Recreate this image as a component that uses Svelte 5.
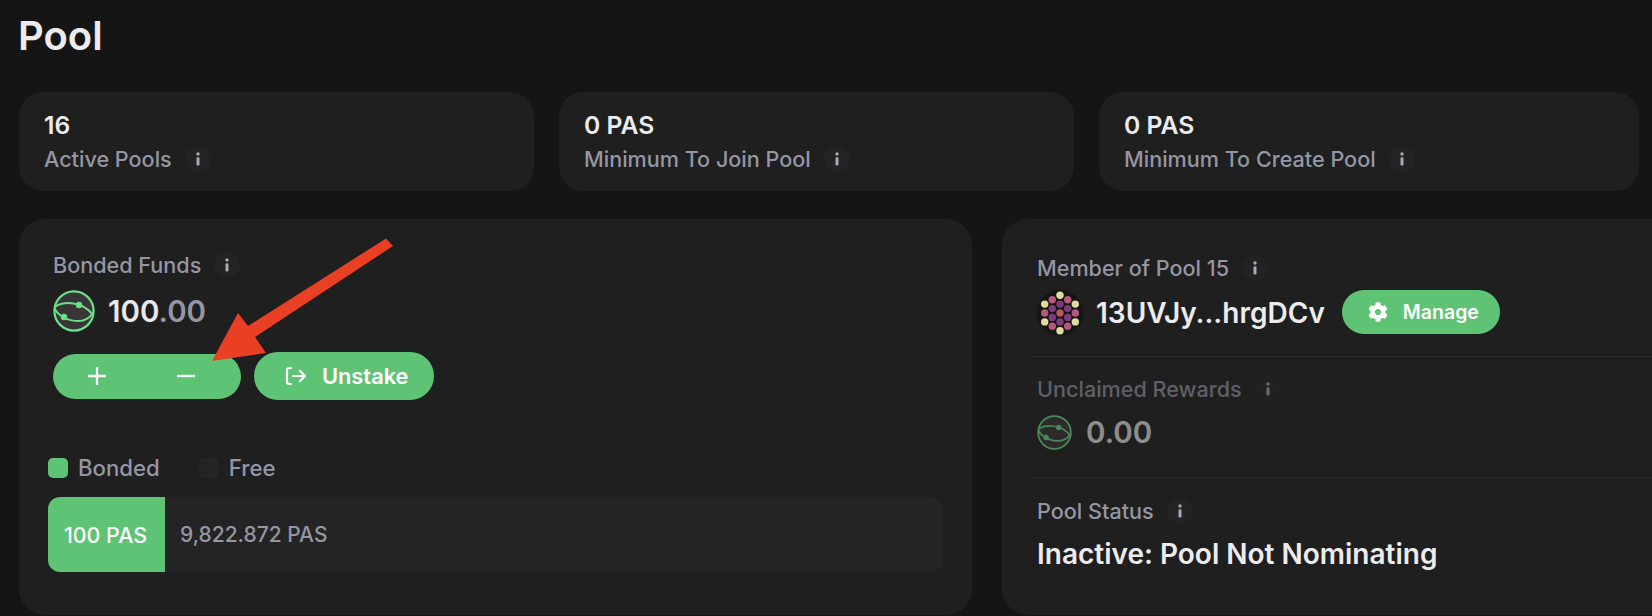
<script>
	const stats = [
		{ value: '16', label: 'Active Pools' },
		{ value: '0 PAS', label: 'Minimum To Join Pool' },
		{ value: '0 PAS', label: 'Minimum To Create Pool' }
	];

	// identicon dots, relative to the middle of the circle
	const yellow = '#e0dc9f';
	const pink = '#b5597a';
	const purple = '#7f3c7a';
	const dots = [
		[0, -17.7, yellow], [7.7, -13.3, pink], [15.3, -8.9, yellow], [15.3, 0, pink], [15.3, 8.9, yellow],
		[7.7, 13.3, pink], [0, 17.7, yellow], [-7.7, 13.3, pink], [-15.3, 8.9, yellow], [-15.3, 0, pink],
		[-15.3, -8.9, yellow], [-7.7, -13.3, pink],
		[0, -8.9, purple], [7.7, -4.4, purple], [7.7, 4.4, purple], [0, 8.9, purple], [-7.7, 4.4, purple], [-7.7, -4.4, purple],
		[0, 0, '#b8555f']
	];
</script>

{#snippet info()}
	<span class="info">
		<svg width="8" height="14" viewBox="0 0 8 14">
			<circle cx="4" cy="2" r="1.7" fill="currentColor" />
			<rect x="2.5" y="5.2" width="3" height="8.3" rx="1.2" fill="currentColor" />
		</svg>
	</span>
{/snippet}

{#snippet token(size)}
	<svg class="token" width={size} height={size} viewBox="0 0 42 42" fill="none">
		<circle cx="21" cy="21" r="19.6" fill="#3a3436" stroke="#6ae08a" stroke-width="2.2" />
		<path d="M2 17C10 11 30 11 40 25" stroke="#6ae08a" stroke-width="2" />
		<path d="M2 19C6 29 30 38 40 23" stroke="#6ae08a" stroke-width="2" />
		<circle cx="26" cy="15" r="3.2" fill="#6ae08a" />
		<circle cx="11" cy="27" r="3.2" fill="#6ae08a" />
	</svg>
{/snippet}

<div class="page">
	<h1>Pool</h1>

	<div class="stats">
		{#each stats as stat}
			<div class="stat">
				<div class="stat-value">{stat.value}</div>
				<div class="label">{stat.label} {@render info()}</div>
			</div>
		{/each}
	</div>

	<div class="panels">
		<section class="panel funds">
			<div class="label indent">Bonded Funds {@render info()}</div>
			<div class="amount indent">
				{@render token(42)}
				<span class="num">100<span class="decimals">.00</span></span>
			</div>
			<div class="actions indent">
				<div class="btn-group">
					<svg width="20" height="20" viewBox="0 0 20 20"><path d="M10 1v18M1 10h18" stroke="#fff" stroke-width="2.3" /></svg>
					<svg width="20" height="20" viewBox="0 0 20 20"><path d="M1 10h18" stroke="#fff" stroke-width="2.3" /></svg>
				</div>
				<div class="btn unstake">
					<svg width="22" height="20" viewBox="0 0 22 20" fill="none" stroke="#fff" stroke-width="2.2" stroke-linecap="round" stroke-linejoin="round">
						<path d="M6 2H4.5Q2 2 2 4.5v11Q2 18 4.5 18H6" />
						<path d="M8 10h12M15 5l5 5-5 5" />
					</svg>
					Unstake
				</div>
			</div>

			<div class="legend">
				<span class="swatch green"></span><span class="legend-text">Bonded</span>
				<span class="swatch dark"></span><span class="legend-text">Free</span>
			</div>
			<div class="bar">
				<div class="bar-bonded">100 PAS</div>
				<div class="bar-free">9,822.872 PAS</div>
			</div>
		</section>

		<section class="panel member">
			<div class="label">Member of Pool 15 {@render info()}</div>
			<div class="pool-row">
				<svg width="46" height="46" viewBox="-23 -23 46 46">
					<circle r="23" fill="#151515" />
					{#each dots as [x, y, color]}
						<circle cx={x} cy={y} r="3.7" fill={color} />
					{/each}
				</svg>
				<span class="address">13UVJy...hrgDCv</span>
				<div class="btn manage">
					<svg width="20" height="20" viewBox="0 0 512 512"><path fill="#fff" d="M487.4 315.7l-42.6-24.6c4.3-23.2 4.3-47 0-70.2l42.6-24.6c4.9-2.8 7.1-8.6 5.5-14-11.1-35.6-30-67.8-54.7-94.6-3.8-4.1-10-5.1-14.8-2.3L380.8 110c-17.9-15.4-38.5-27.3-60.8-35.1V25.8c0-5.6-3.9-10.5-9.4-11.7-36.7-8.2-74.3-7.8-109.2 0-5.5 1.2-9.4 6.1-9.4 11.7V75c-22.2 7.9-42.8 19.8-60.8 35.1L88.7 85.5c-4.9-2.8-11-1.9-14.8 2.3-24.7 26.7-43.6 58.9-54.7 94.6-1.7 5.4.6 11.2 5.5 14L67.3 221c-4.3 23.2-4.3 47 0 70.2l-42.6 24.6c-4.9 2.8-7.1 8.6-5.5 14 11.1 35.6 30 67.8 54.7 94.6 3.8 4.1 10 5.1 14.8 2.3l42.6-24.6c17.9 15.4 38.5 27.3 60.8 35.1v49.2c0 5.6 3.9 10.5 9.4 11.7 36.7 8.2 74.3 7.8 109.2 0 5.5-1.2 9.4-6.1 9.4-11.7v-49.2c22.2-7.9 42.8-19.8 60.8-35.1l42.6 24.6c4.9 2.8 11 1.9 14.8-2.3 24.7-26.7 43.6-58.9 54.7-94.6 1.5-5.5-.7-11.3-5.6-14.1zM256 336c-44.1 0-80-35.9-80-80s35.9-80 80-80 80 35.9 80 80-35.9 80-80 80z" /></svg>
					Manage
				</div>
			</div>
			<hr />
			<div class="rewards">
				<div class="label">Unclaimed Rewards {@render info()}</div>
				<div class="amount small">
					{@render token(35)}
					<span class="num">0.00</span>
				</div>
			</div>
			<hr class="second" />
			<div class="label status-label">Pool Status {@render info()}</div>
			<div class="status">Inactive: Pool Not Nominating</div>
		</section>
	</div>

	<!-- red annotation arrow over the buttons -->
	<svg class="arrow" width="400" height="380" viewBox="0 0 400 380">
		<path d="M386 238.5 393 246 255 337 266 353 212 361 238 313 248 326Z" fill="#e93f25" />
	</svg>
</div>

<style>
	:global(body) {
		margin: 0;
		background: #151515;
	}

	.page {
		position: relative;
		box-sizing: border-box;
		width: 1652px;
		height: 616px;
		padding: 13px 0 0 18px;
		overflow: hidden;
		background: #151515;
		font-family: Inter, 'Noto Sans', sans-serif;
		color: #ececee;
	}

	h1 {
		margin: 0 0 33px;
		font-size: 40px;
		line-height: 46px;
		font-weight: 600;
	}

	.stats {
		display: grid;
		grid-template-columns: 515px 515px 540px;
		gap: 25px;
		margin: 0 0 28px 1px;
	}

	.stat {
		box-sizing: border-box;
		height: 99px;
		padding: 17px 25px 0;
		background: #1f1f1f;
		border-radius: 24px;
	}

	.stat-value {
		font-size: 24.7px;
		line-height: 32px;
		font-weight: 600;
		margin-bottom: 5px;
	}

	.label {
		display: flex;
		align-items: center;
		gap: 13px;
		height: 26px;
		font-size: 21.6px;
		font-weight: 500;
		color: #9596a4;
		white-space: nowrap;
	}

	.info {
		display: inline-flex;
		align-items: center;
		justify-content: center;
		width: 26px;
		height: 26px;
		border-radius: 50%;
		background: #232323;
		color: #a8a9b5;
	}

	.panels {
		display: grid;
		grid-template-columns: 953px 680px;
		gap: 30px;
		margin-left: 1px;
	}

	.panel {
		box-sizing: border-box;
		height: 396px;
		background: #1f1f1f;
		border-radius: 26px;
	}

	.funds {
		padding: 33px 29px 0;
	}

	.indent {
		margin-left: 5px;
	}

	.amount {
		display: flex;
		align-items: center;
		gap: 13px;
		margin-top: 12px;
	}

	.token {
		flex: none;
	}

	.num {
		font-size: 29.5px;
		font-weight: 600;
		color: #e8e8ea;
	}

	.decimals {
		color: #9596a4;
	}

	.actions {
		display: flex;
		align-items: center;
		gap: 13px;
		margin-top: 20px;
	}

	.btn-group {
		display: flex;
		align-items: center;
		box-sizing: border-box;
		width: 188px;
		height: 45px;
		padding-left: 34px;
		gap: 69px;
		background: #5ec374;
		border-radius: 23px;
	}

	.btn {
		display: flex;
		align-items: center;
		box-sizing: border-box;
		background: #5ec374;
		color: #fff;
		font-weight: 600;
		white-space: nowrap;
	}

	.unstake {
		width: 180px;
		height: 48px;
		padding-left: 31px;
		gap: 15px;
		font-size: 21.8px;
		border-radius: 24px;
	}

	.legend {
		display: flex;
		align-items: center;
		height: 20px;
		margin-top: 58px;
		font-size: 22.2px;
		font-weight: 500;
		color: #9596a4;
	}

	.legend-text {
		margin-bottom: 2px;
	}

	.swatch {
		width: 20px;
		height: 20px;
		margin-right: 10px;
		border-radius: 5px;
	}

	.swatch.green {
		background: #5ec374;
	}

	.swatch.dark {
		margin-left: 39px;
		background: #242424;
	}

	.bar {
		display: flex;
		height: 75px;
		margin-top: 19px;
		background: #242424;
		border-radius: 12px;
		overflow: hidden;
		font-size: 21px;
		font-weight: 500;
	}

	.bar-bonded {
		display: flex;
		align-items: center;
		justify-content: center;
		width: 117px;
		padding-right: 2px;
		box-sizing: border-box;
		background: #5ec374;
		color: #fff;
		font-size: 21.4px;
	}

	.bar-free {
		display: flex;
		align-items: center;
		padding-left: 15px;
		color: #9596a4;
	}

	.member {
		padding: 36px 0 0 35px;
	}

	.pool-row {
		display: flex;
		align-items: center;
		height: 47px;
		margin-top: 8px;
	}

	.address {
		margin-left: 13px;
		font-size: 28px;
		font-weight: 600;
		color: #ececee;
		white-space: nowrap;
	}

	.manage {
		width: 158px;
		height: 44px;
		margin: 0 0 1px 17px;
		padding-left: 26px;
		gap: 15px;
		font-size: 19.5px;
		border-radius: 22px;
	}

	hr {
		height: 1px;
		margin: 20px 0 19px -5px;
		border: 0;
		background: #2a2a2a;
	}

	hr.second {
		margin: 27px 0 20px -5px;
	}

	.rewards {
		opacity: 0.55;
	}

	.amount.small {
		gap: 14px;
	}

	.status {
		margin-top: 14px;
		font-size: 28px;
		line-height: 32px;
		font-weight: 600;
		white-space: nowrap;
	}

	.arrow {
		position: absolute;
		left: 0;
		top: 0;
	}
</style>
